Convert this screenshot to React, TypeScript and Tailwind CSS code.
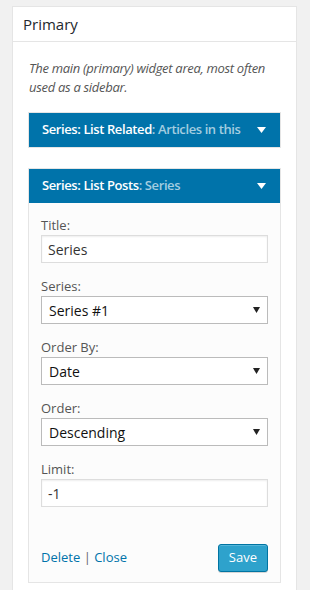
import React from "react";

function Caret() {
  return (
    <svg width="9" height="6" viewBox="0 0 9 6" className="shrink-0">
      <path d="M0 0h9L4.5 6z" fill="#fff" />
    </svg>
  );
}

function SelectArrow() {
  return (
    <svg width="7" height="6" viewBox="0 0 7 6" className="shrink-0">
      <path d="M0 0h7L3.5 6z" fill="#222" />
    </svg>
  );
}

function WidgetTitle({ name, sub }: { name: string; sub: string }) {
  return (
    <div className="h-[34px] bg-[#0073aa] flex items-center pl-[13px] pr-[14px] gap-[14px]">
      <div className="flex-1 overflow-hidden whitespace-nowrap text-[13px] font-semibold tracking-[-0.4px] text-white">
        {name}
        <span className="text-[#a3cde0]">: {sub}</span>
      </div>
      <Caret />
    </div>
  );
}

function Field({ label, children }: { label: string; children: React.ReactNode }) {
  return (
    <div className="mb-[14px]">
      <div className="text-[13px] leading-[18px] text-[#555] mb-px">{label}</div>
      {children}
    </div>
  );
}

function TextBox({ value }: { value: string }) {
  return (
    <input
      type="text"
      defaultValue={value}
      className="w-full h-[28px] px-[6px] bg-white border border-[#ddd] shadow-[inset_0_1px_2px_rgba(0,0,0,0.07)] text-[14px] text-[#333] outline-none"
      style={{ fontFamily: "inherit" }}
    />
  );
}

function SelectBox({ value }: { value: string }) {
  return (
    <div className="w-full h-[28px] pl-[7px] pr-[7px] bg-white border border-[#bbb] flex items-center justify-between text-[14px] text-[#111]">
      <span>{value}</span>
      <SelectArrow />
    </div>
  );
}

export default function App() {
  return (
    <div
      className="w-[310px] h-[590px] overflow-hidden bg-[#f1f1f1] pt-[6px] pl-[12px]"
      style={{ fontFamily: '"Open Sans", "Noto Sans", sans-serif' }}
    >
      <div className="w-[285px] h-[600px] bg-white border border-[#e5e5e5]">
        {/* Header */}
        <div className="h-[35px] border-b border-[#e5e5e5] pl-[10px] flex items-center text-[15px] text-[#23282d]">
          Primary
        </div>

        <div className="px-[15px] pt-[17px]">
          <p className="italic text-[13px] leading-[19px] tracking-[-0.3px] text-[#555] pl-px">
            The main (primary) widget area, most often used as a sidebar.
          </p>

          {/* Collapsed widget */}
          <div className="mt-[15px] border border-[#e5e5e5]">
            <WidgetTitle name="Series: List Related" sub="Articles in this series" />
          </div>

          {/* Open widget */}
          <div className="mt-[20px] border border-[#e5e5e5]">
            <WidgetTitle name="Series: List Posts" sub="Series" />
            <div className="bg-[#fcfcfc] px-[12px] pt-[13px] pb-[10px]">
              <Field label="Title:">
                <TextBox value="Series" />
              </Field>
              <Field label="Series:">
                <SelectBox value="Series #1" />
              </Field>
              <Field label="Order By:">
                <SelectBox value="Date" />
              </Field>
              <Field label="Order:">
                <SelectBox value="Descending" />
              </Field>
              <Field label="Limit:">
                <TextBox value="-1" />
              </Field>

              <div className="mt-[37px] flex items-center justify-between">
                <div className="text-[13px] text-[#0073aa]">
                  <a href="#" className="text-[#0073aa]">Delete</a>
                  <span className="text-[#666]"> | </span>
                  <a href="#" className="text-[#0073aa]">Close</a>
                </div>
                <button className="h-[28px] px-[10px] rounded-[3px] bg-[#2ea2cc] border border-[#0074a2] text-white text-[13px] shadow-[inset_0_1px_0_rgba(120,200,230,0.5),0_1px_0_rgba(0,0,0,0.15)]">
                  Save
                </button>
              </div>
            </div>
          </div>
        </div>
      </div>
    </div>
  );
}
